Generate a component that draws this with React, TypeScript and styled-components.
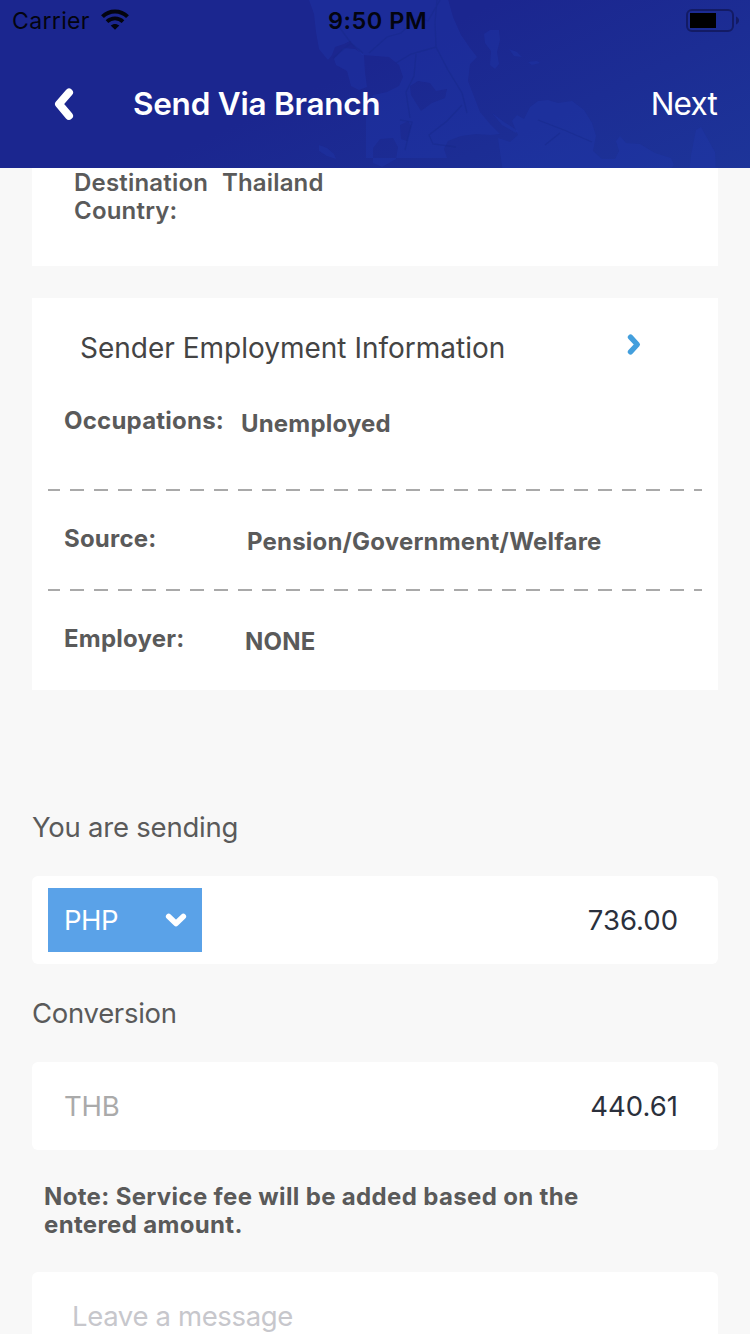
import React from "react";
import styled, { createGlobalStyle } from "styled-components";

const GlobalStyle = createGlobalStyle`
  body {
    margin: 0;
    background: #f8f8f8;
    font-family: Inter, "Liberation Sans", sans-serif;
  }
`;

const Screen = styled.div`
  width: 750px;
  height: 1334px;
  overflow: hidden;
  background: #f8f8f8;
  display: flex;
  flex-direction: column;
`;

const Text = styled.span<{ $size?: number; $weight?: number; $color?: string; $track?: number; $line?: number }>`
  display: block;
  white-space: nowrap;
  font-size: ${(p) => p.$size ?? 24}px;
  font-weight: ${(p) => p.$weight ?? 600};
  color: ${(p) => p.$color ?? "#5a5a5a"};
  letter-spacing: ${(p) => p.$track ?? 0}px;
  line-height: ${(p) => p.$line ?? 28}px;
`;

const Header = styled.header`
  position: relative;
  flex: none;
  height: 168px;
  background: linear-gradient(155deg, #1b268f 45%, #1d3499 100%);
`;

const HeaderMap = styled.svg`
  position: absolute;
  inset: 0;
`;

const StatusBar = styled.div`
  position: relative;
  height: 40px;
  padding: 0 11px 0 12px;
  display: grid;
  grid-template-columns: 316px auto 1fr;
  align-items: center;
`;

const StatusLeft = styled.div`
  display: flex;
  align-items: center;
  gap: 11px;
`;

const StatusText = styled.div`
  padding-top: 2px;
`;

const StatusRight = styled.div`
  display: flex;
  justify-content: flex-end;
`;

const NavBar = styled.nav`
  position: relative;
  height: 128px;
  display: flex;
  align-items: center;
  padding: 0 33px 0 54px;
`;

const NavTitle = styled.div`
  flex: 1;
  padding-left: 57px;
`;

const Content = styled.main`
  flex: 1;
  min-height: 0;
  overflow: hidden;
  padding: 0 32px;
`;

const Card = styled.section`
  background: #fff;
`;

const DestinationCard = styled(Card)`
  height: 98px;
  box-sizing: border-box;
  padding: 1px 42px 0;
  display: grid;
  grid-template-columns: 148px 1fr;
`;

const EmploymentCard = styled(Card)`
  margin-top: 32px;
  height: 392px;
`;

const CardHeading = styled.div`
  height: 92px;
  box-sizing: border-box;
  padding: 33px 76px 0 48px;
  display: flex;
  justify-content: space-between;
  align-items: flex-start;
`;

const InfoRow = styled.div<{ $height: number; $top: number; $indent: number }>`
  height: ${(p) => p.$height}px;
  box-sizing: border-box;
  padding: ${(p) => p.$top}px 32px 0;
  display: grid;
  grid-template-columns: ${(p) => p.$indent}px 1fr;
`;

const InfoValue = styled.div`
  padding-top: 3px;
`;

const Divider = styled.div`
  height: 2px;
  margin: 0 16px;
  background: repeating-linear-gradient(90deg, #a9a9a9 0 14px, transparent 14px 24px) -2px 0 / 670px 2px;
`;

const FieldLabel = styled.div<{ $top: number }>`
  box-sizing: border-box;
  padding-top: ${(p) => p.$top}px;
  height: ${(p) => p.$top + 63}px;
`;

const Field = styled.div`
  height: 88px;
  box-sizing: border-box;
  padding: 0 40px 0 16px;
  border-radius: 6px;
  background: #fff;
  display: flex;
  align-items: center;
  justify-content: space-between;
`;

const CurrencySelect = styled.button`
  width: 154px;
  height: 64px;
  border: 0;
  padding: 0 15px 0 16px;
  background: #5aa2e8;
  font-family: inherit;
  display: flex;
  align-items: center;
  justify-content: space-between;
`;

const Unit = styled.div`
  padding-left: 16px;
`;

const Note = styled.div`
  height: 122px;
  box-sizing: border-box;
  padding: 33px 12px 0;
`;

const MessageBox = styled.div`
  height: 120px;
  box-sizing: border-box;
  padding: 27px 40px;
  border-radius: 6px;
  background: #fff;
`;

const MapArtwork = () => (
  <HeaderMap width="750" height="168" viewBox="0 0 750 168" aria-hidden="true">
    <g fill="#1f38ad" fillOpacity=".34">
      <path d="M309 0l5 14 2 18 3 17 9 11 4-5 3-8 9-3 6-3 12 14 13 1 14 1 10 8 4 12-4 9-12 6-14 3-4 8-3 16v39h81l-3-9 4-8 13-5 15-2 14 1 10-1-10-10-10-12-7-18-5-13 2-17 7-7-7-9-9-13-8-18-5-18zM410 86l8-5 12 2 6 8 11-2-2 9-13 5-11 8-5-8-5-8zM400 125l8-4 3 5-4 15-6-2zM373 148l7-9 13-1 5 9-2 12-14 8-9-4z" fillRule="evenodd" />
      <path d="M334 59l10-11 11 1 9 6 1 17 2 15-8 3-8-4-4-15-11-6z" />
      <path d="M484 34l6-4h9l1 10-3 12 2 12-4 5-5-4 1-14-6-8zM509 49l8 3 5 5-8-1zM528 62l9-1 3 2-8 2zM492 113l12 9 14 9-2 2-14-8z" />
      <path d="M498 138l12 4 8-7-6-14 5-6 7 4 6-12 8-6 10-1 10 3 14-2 12 9 8 13 4 13-3 15 9 8h13l4-8-3-10 4-5 6 7 14 1 15 9 16 5 3 7-6 8h21l2-18 5-25 5-3 5 9 9 16 1 20v1H503z" />
      <path d="M319 145l8 3 7 6 2 5-9-3-8-5z" />
    </g>
    <g fill="none" stroke="#162786" strokeWidth="1.300" opacity=".4">
      <path d="M333 58l18-15 12 10M337 24l14 19M369 53l18-16 14-4 17-16 10 4 12-21M396 63l15-9 25-7 12 23 14 23 5 20M416 54l-2 22-8 16 4 26M436 47l-1-25 2-22M462 105l-15 16-18 14 4 9 23 3M405 150l7-28-12-2M538 120l26 10 28 12M560 133l-15 12" />
    </g>
  </HeaderMap>
);

const WifiIcon = () => (
  <svg width="28" height="22" viewBox="0 0 28 22" fill="none">
    <path d="M1.500 7.700C8.500 0.700 19.500 0.700 26.500 7.700" stroke="#03040f" strokeWidth="4" />
    <path d="M6 12.600C10.600 8.300 17.400 8.300 22 12.600" stroke="#03040f" strokeWidth="3.800" />
    <path d="M9.700 16.600C12.200 14.300 15.800 14.300 18.300 16.600L14 20.700z" fill="#03040f" />
  </svg>
);

const BatteryIcon = () => (
  <svg width="53" height="24" viewBox="0 0 53 24">
    <rect x="1" y="2" width="46" height="21" rx="5" fill="none" stroke="#131b65" strokeWidth="2" />
    <rect x="4" y="5" width="26" height="15" fill="#000" />
    <path d="M50 8.500c4 1.500 4 6.500 0 8z" fill="#131b65" />
  </svg>
);

export default function App() {
  return (
    <Screen>
      <GlobalStyle />
      <Header>
        <MapArtwork />
        <StatusBar>
          <StatusLeft>
            <StatusText>
              <Text $size={23} $weight={400} $color="#03040f" $track={0.350}>Carrier</Text>
            </StatusText>
            <WifiIcon />
          </StatusLeft>
          <StatusText>
            <Text $size={23.500} $color="#03040f" $track={0.500}>9:50 PM</Text>
          </StatusText>
          <StatusRight>
            <BatteryIcon />
          </StatusRight>
        </StatusBar>
        <NavBar>
          <svg width="22" height="34" viewBox="0 0 22 34" fill="none">
            <path d="M15 5.500L5 17L15 28.800" stroke="#fff" strokeWidth="8" strokeLinecap="round" strokeLinejoin="round" />
          </svg>
          <NavTitle>
            <Text $size={31.500} $color="#fff" $track={-0.250} $line={42}>Send Via Branch</Text>
          </NavTitle>
          <Text $size={31.500} $weight={400} $color="#fff" $track={-0.800} $line={42}>Next</Text>
        </NavBar>
      </Header>
      <Content>
        <DestinationCard>
          <Text $track={0.200}>Destination<br />Country:</Text>
          <Text $track={0.150}>Thailand</Text>
        </DestinationCard>
        <EmploymentCard>
          <CardHeading>
            <Text $size={28} $weight={400} $color="#444" $line={34}>Sender Employment Information</Text>
            <svg width="16" height="26" viewBox="0 -1 16 26" fill="none">
              <path d="M4.500 5.200L11.300 12.500L4.500 19.800" stroke="#439fdd" strokeWidth="5.400" strokeLinecap="round" strokeLinejoin="round" />
            </svg>
          </CardHeading>
          <InfoRow $height={99} $top={17} $indent={177}>
            <Text $weight={700} $track={0.220}>Occupations:</Text>
            <InfoValue><Text $weight={700} $track={0.180}>Unemployed</Text></InfoValue>
          </InfoRow>
          <Divider />
          <InfoRow $height={98} $top={34} $indent={183}>
            <Text $weight={700} $track={0.220}>Source:</Text>
            <InfoValue><Text $weight={700} $track={0.200}>Pension/Government/Welfare</Text></InfoValue>
          </InfoRow>
          <Divider />
          <InfoRow $height={98} $top={34} $indent={181}>
            <Text $weight={700} $track={0.220}>Employer:</Text>
            <InfoValue><Text $weight={700} $track={0.200}>NONE</Text></InfoValue>
          </InfoRow>
        </EmploymentCard>
        <FieldLabel $top={123}>
          <Text $size={27.500} $weight={400} $track={-0.230}>You are sending</Text>
        </FieldLabel>
        <Field>
          <CurrencySelect>
            <Text $size={27.500} $weight={400} $color="#fff" $track={-0.500}>PHP</Text>
            <svg width="22" height="14" viewBox="0 0 22 14" fill="none">
              <path d="M3.700 3.500L11 10.500L18.300 3.500" stroke="#fff" strokeWidth="5.600" strokeLinecap="round" strokeLinejoin="round" />
            </svg>
          </CurrencySelect>
          <Text $size={27.500} $weight={400} $color="#2b303c">736.00</Text>
        </Field>
        <FieldLabel $top={35}>
          <Text $size={27.500} $weight={400} $track={-0.300}>Conversion</Text>
        </FieldLabel>
        <Field>
          <Unit><Text $size={27.500} $weight={400} $color="#aaa" $track={-0.200}>THB</Text></Unit>
          <Text $size={27.500} $weight={400} $color="#2b303c">440.61</Text>
        </Field>
        <Note>
          <Text $weight={700} $track={0.350}>Note: Service fee will be added based on the<br />entered amount.</Text>
        </Note>
        <MessageBox>
          <Text $size={27.500} $weight={400} $color="#c7c7cc" $track={-0.350} $line={34}>Leave a message</Text>
        </MessageBox>
      </Content>
    </Screen>
  );
}
